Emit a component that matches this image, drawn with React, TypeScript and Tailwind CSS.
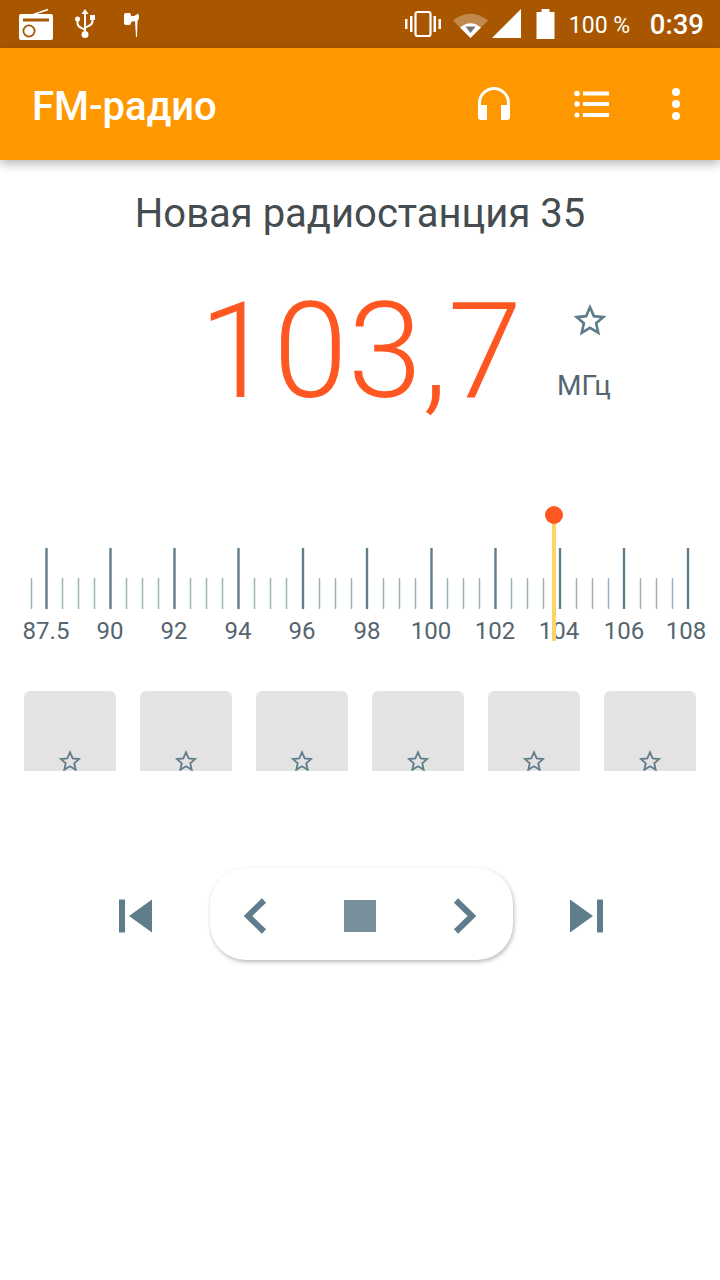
const roboto = "font-['Roboto',sans-serif]";

function Star({ size, className }: { size: number; className?: string }) {
  return (
    <svg width={size} height={size} viewBox="0 0 24 24" className={className}>
      <path
        d="M12 2.500l2.900 6.600 7.100.7-5.400 4.700 1.600 7-6.200-3.700-6.200 3.700 1.600-7L2 9.800l7.100-.7z"
        fill="none"
        stroke="#607D8B"
        strokeWidth="2"
        strokeLinejoin="miter"
      />
    </svg>
  );
}

function StatusLeft() {
  return (
    <div className="flex items-center">
      {/* radio */}
      <svg width="36" height="34" viewBox="0 0 36 34" className="ml-[18px]">
        <path d="M2 12L30 2.500" stroke="#fff" strokeWidth="1.600" />
        <rect x="1" y="7" width="34" height="26" rx="2" fill="#fff" />
        <rect x="5" y="11.500" width="26" height="3" fill="#A85700" />
        <circle cx="11" cy="24" r="5.600" fill="none" stroke="#A85700" strokeWidth="1.800" />
      </svg>
      {/* usb */}
      <svg width="22" height="32" viewBox="0 0 22 32" className="ml-[20px]">
        <path d="M11 1l3.500 5h-2.500v17h-2V6H7.500z" fill="#fff" />
        <circle cx="11" cy="26.500" r="3.500" fill="#fff" />
        <circle cx="3.500" cy="11" r="2.500" fill="#fff" />
        <rect x="16" y="7" width="5" height="5" fill="#fff" />
        <path d="M3.500 12v3q0 3 3 4.500l4.500 2.500M18.500 11v2q0 3-3 4.500L11 20" fill="none" stroke="#fff" strokeWidth="2" />
      </svg>
      {/* earphone */}
      <svg width="18" height="24" viewBox="0 0 18 24" className="ml-[28px] mt-[2px]">
        <rect x="0" y="0" width="7" height="12" rx="2" fill="#fff" />
        <path d="M7 3h3l4.500-2.500.5 4.500-1.500 3.500-.5 15.500h-1L11 8 7 9z" fill="#fff" />
      </svg>
    </div>
  );
}

function StatusRight() {
  return (
    <div className="flex items-center">
      <svg width="36" height="28" viewBox="0 0 36 28">
        <rect x="10.500" y="2" width="15" height="24" rx="2" fill="none" stroke="#fff" strokeWidth="2.200" />
        <rect x="0" y="9" width="2.500" height="10" fill="#fff" />
        <rect x="5" y="6" width="2.500" height="16" fill="#fff" />
        <rect x="28.500" y="6" width="2.500" height="16" fill="#fff" />
        <rect x="33.500" y="9" width="2.500" height="10" fill="#fff" />
      </svg>
      <svg width="36" height="28" viewBox="0 0 36 28" className="ml-[12px]">
        <path d="M0 10.500Q17.500-3 35 10.500L17.500 28z" fill="#fff" fillOpacity="0.3" />
        <path d="M7 17.500q10.500-8.500 21 0L17.500 28z" fill="#fff" />
        <path d="M12.500 16.500h10L17.500 23z" fill="#757575" />
      </svg>
      <svg width="30" height="30" viewBox="0 0 30 30" className="ml-[3px]">
        <path d="M0 29L29 0v29z" fill="#fff" />
      </svg>
      <svg width="20" height="30" viewBox="0 0 20 30" className="ml-[14px]">
        <path d="M5.500 0h8v3h5v27h-18V3h5z" fill="#fff" />
      </svg>
      <span className={`${roboto} ml-[13px] mt-[2px] w-[62px] text-[23px] leading-none text-white whitespace-nowrap`}>100 %</span>
      <span className={`${roboto} ml-[19px] mr-[16px] mt-[2px] text-[27.500px] font-medium leading-none text-white`}>0:39</span>
    </div>
  );
}

function Dial() {
  const majors = [46.500, 110.500, 174.500, 238.500, 303, 367, 431.500, 495.500, 560, 624, 688];
  const labels = [
    ["87.5", 46],
    ["90", 110],
    ["92", 174],
    ["94", 238],
    ["96", 302],
    ["98", 367],
    ["100", 431],
    ["102", 495],
    ["104", 559],
    ["106", 624],
    ["108", 686],
  ] as const;
  const minors = [31.500];
  majors.slice(0, -1).forEach((x, i) => {
    const step = (majors[i + 1] - x) / 4;
    for (let k = 1; k < 4; k++) minors.push(Math.floor(x + step * k) + 0.500);
  });
  return (
    <svg width="720" height="150" viewBox="0 500 720 150" className="block">
      {minors.map((x) => (
        <line key={x} x1={x} x2={x} y1="578" y2="609" stroke="#9DB1BB" strokeWidth="1.500" />
      ))}
      {majors.map((x) => (
        <line key={x} x1={x} x2={x} y1="548" y2="609" stroke="#607D8B" strokeWidth="2.400" />
      ))}
      {labels.map(([t, x]) => (
        <text key={t} x={x} y="639" textAnchor="middle" fontFamily="Roboto, sans-serif" fontSize="24" fill="#546570">
          {t}
        </text>
      ))}
      <rect x="552" y="520" width="4" height="121" fill="#FFD466" />
      <circle cx="554" cy="515" r="9" fill="#FF5722" />
    </svg>
  );
}

function Preset() {
  return (
    <div className="flex h-20 w-[92px] items-end justify-center overflow-hidden rounded-t-[6px] bg-[#E3E3E3]">
      <Star size={22} className="mb-[-1px]" />
    </div>
  );
}

export default function App() {
  return (
    <div className={`${roboto} h-[1280px] w-[720px] overflow-hidden bg-white`}>
      <div className="flex h-12 items-center justify-between bg-[#A85700]">
        <StatusLeft />
        <StatusRight />
      </div>

      <div className="flex h-[112px] items-center justify-between bg-[#FF9800] shadow-[0_4px_10px_rgba(0,0,0,0.28)]">
        <span className="ml-[32px] mt-[6px] text-[40px] font-medium leading-none text-white">FM-радио</span>
        <div className="flex items-center">
          <svg width="34" height="34" viewBox="0 0 34 34">
            <path d="M2.500 20V16a14.500 14.500 0 0 1 29 0v4" fill="none" stroke="#fff" strokeWidth="3" />
            <path d="M1 18h9v15H4q-3 0-3-3zM24 18h9v12q0 3-3 3h-6z" fill="#fff" />
          </svg>
          <svg width="36" height="28" viewBox="0 0 36 28" className="ml-[63px]">
            <circle cx="3" cy="3.500" r="2.800" fill="#fff" />
            <circle cx="3" cy="14" r="2.800" fill="#fff" />
            <circle cx="3" cy="25" r="2.500" fill="#fff" />
            <rect x="9" y="1.500" width="26" height="4" fill="#fff" />
            <rect x="9" y="12" width="26" height="4" fill="#fff" />
            <rect x="9" y="23" width="26" height="4" fill="#fff" />
          </svg>
          <svg width="10" height="34" viewBox="0 0 10 34" className="ml-[61px] mr-[39px]">
            <circle cx="5" cy="5" r="4" fill="#fff" />
            <circle cx="5" cy="17" r="4" fill="#fff" />
            <circle cx="5" cy="29" r="4" fill="#fff" />
          </svg>
        </div>
      </div>

      <div className="mt-[29px] text-center text-[40px] leading-[50px] text-[#454C50]">Новая радиостанция 35</div>

      <div className="mt-[43px] flex h-[150px]">
        <span className="ml-[199px] h-[140px] w-[328px] text-[134px] font-light leading-[140px] text-[#FF5722] whitespace-nowrap">103,7</span>
        <div className="ml-[30px] flex flex-col items-start">
          <Star size={32} className="ml-[17px] mt-[22px]" />
          <span className="mt-[35px] text-[28px] leading-[30px] text-[#54666F]">МГц</span>
        </div>
      </div>

      <div className="mt-[68px]">
        <Dial />
      </div>

      <div className="mt-[41px] flex justify-between px-6">
        <Preset />
        <Preset />
        <Preset />
        <Preset />
        <Preset />
        <Preset />
      </div>

      <div className="mt-[97px] flex items-center justify-center">
        <svg width="34" height="34" viewBox="0 0 34 34" className="ml-[2px] mt-[4px]">
          <rect x="0" y="0.500" width="6" height="33" fill="#607D8B" />
          <path d="M10 17L33 0.500v33z" fill="#607D8B" />
        </svg>
        <div className="ml-[57px] mr-[56px] flex h-[92px] w-[303px] items-center justify-between rounded-[36px] bg-white pl-[33px] pr-[36px] pt-[4px] shadow-[1px_2px_4px_rgba(0,0,0,0.28)]">
          <svg width="24" height="36" viewBox="0 0 24 36">
            <path d="M21 2.500L5 18l16 15.500" fill="none" stroke="#607D8B" strokeWidth="6" />
          </svg>
          <div className="h-8 w-8 bg-[#78909C]" />
          <svg width="24" height="36" viewBox="0 0 24 36">
            <path d="M3 2.500L19 18 3 33.500" fill="none" stroke="#607D8B" strokeWidth="6" />
          </svg>
        </div>
        <svg width="34" height="34" viewBox="0 0 34 34" className="mt-[4px]">
          <path d="M1 0.500v33L24 17z" fill="#607D8B" />
          <rect x="28" y="0.500" width="6" height="33" fill="#607D8B" />
        </svg>
      </div>
    </div>
  );
}
